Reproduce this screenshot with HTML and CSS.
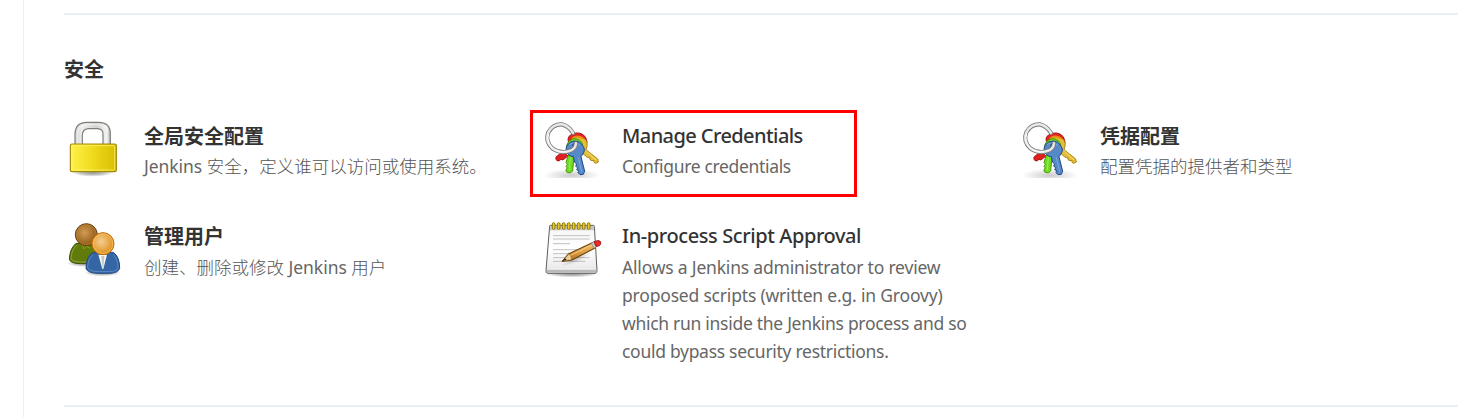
FILE: index.html
```html
<!DOCTYPE html>
<html lang="zh-CN">
<head>
<meta charset="utf-8">
<title>Jenkins</title>
<link rel="stylesheet" href="styles.css">
</head>
<body>
<svg class="defs" width="0" height="0" aria-hidden="true">
  <defs>
    <linearGradient id="gold"><stop offset="0" stop-color="#fff04a"/><stop offset=".45" stop-color="#f0dc20"/><stop offset="1" stop-color="#d8be00"/></linearGradient>
    <linearGradient id="steel"><stop offset="0" stop-color="#d0d3cf"/><stop offset=".2" stop-color="#f0f0ef"/><stop offset=".6" stop-color="#d0d3ce"/><stop offset=".9" stop-color="#f4f4f4"/><stop offset="1" stop-color="#b5b8b2"/></linearGradient>
    <radialGradient id="shade"><stop offset="0" stop-color="#000" stop-opacity=".42"/><stop offset=".6" stop-color="#000" stop-opacity=".22"/><stop offset="1" stop-color="#000" stop-opacity="0"/></radialGradient>
    <radialGradient id="soft"><stop offset="0" stop-color="#000" stop-opacity=".2"/><stop offset="1" stop-color="#000" stop-opacity="0"/></radialGradient>
    <radialGradient id="brown" cx=".42" cy=".4" r=".55"><stop offset="0" stop-color="#d39a55"/><stop offset="1" stop-color="#95601a"/></radialGradient>
    <radialGradient id="orange" cx=".42" cy=".4" r=".55"><stop offset="0" stop-color="#f5cd91"/><stop offset="1" stop-color="#e09525"/></radialGradient>
    <linearGradient id="paper" x2="0" y2="1"><stop offset="0" stop-color="#f5f5f5"/><stop offset=".5" stop-color="#fff"/><stop offset="1" stop-color="#e5e5e5"/></linearGradient>
    <linearGradient id="wood" x2="0" y2="1"><stop offset="0" stop-color="#f2c476"/><stop offset=".5" stop-color="#dda044"/><stop offset="1" stop-color="#a76b1d"/></linearGradient>
    <g id="keys">
      <ellipse cx="107" cy="190" rx="85" ry="20" fill="url(#soft)"/>
      <path d="M82 119L64 131Q57 136 60 142L63 146Q70 149 75 142L81 144L96 132Z" fill="#e02020" stroke="#a40000" stroke-width="2.5"/>
      <path d="M98 91Q92 76 104 69Q121 58 138 66Q151 72 153 89L147 113H105Z" fill="#de2724" stroke="#a40000" stroke-width="2.5"/>
      <path d="M105 86Q117 70 135 75Q157 82 153 103L150 113L185 141L187 150L179 154L174 151L174 145L168 146L162 143L161 136L154 136L135 120Z" fill="#e4bf3a" stroke="#b08409" stroke-width="3"/>
      <path d="M151 117L180 144" stroke="#f5df7a" stroke-width="3"/>
      <path d="M108 80Q123 68 140 79" fill="none" stroke="#ef8c14" stroke-width="6"/>
      <path d="M93 98Q99 81 117 80Q138 83 140 100L115 125L110 177L104 182H96L90 178L91 171L94 168L90 163L94 157L90 151L98 126Q88 112 93 98Z" fill="#70db24" stroke="#4b9a06" stroke-width="3"/>
      <path d="M103 136L100 175" stroke="#9cf057" stroke-width="3"/>
      <path d="M104 90Q126 82 137 97Q150 110 142 124L135 134L146 178L142 187L132 188L126 182L128 176L122 173L125 168L119 162L122 156L116 151L112 134Q95 132 91 117Q87 101 104 90Z" fill="#5589c7" stroke="#204a87" stroke-width="3"/>
      <path d="M127 136L137 179M99 98Q118 86 132 101" fill="none" stroke="#7da8dc" stroke-width="3"/>
      <circle cx="116" cy="100" r="7" fill="#31486b"/>
      <path d="M120 94Q118 112 100 117Q72 126 49 109Q26 87 37 61Q51 36 77 37Q98 41 111 63" fill="none" stroke="#777" stroke-width="12.5" stroke-linecap="round"/>
      <path d="M120 94Q118 112 100 117Q72 126 49 109Q26 87 37 61Q51 36 77 37Q98 41 111 63" fill="none" stroke="#e8e8e8" stroke-width="7.5" stroke-linecap="round"/>
      <path d="M91 119Q65 123 47 106Q30 88 38 66" fill="none" stroke="#fff" stroke-width="3"/>
    </g>
  </defs>
</svg>
<div class="page">
  <main class="panel">
    <section class="section">
      <h2 class="section-title">安全</h2>
      <div class="items">
        <a class="item first-row">
          <svg class="icon" viewBox="12 16 180 180">
            <ellipse cx="98" cy="180" rx="62" ry="12" fill="url(#shade)"/>
            <path d="M45 98V63Q46 29 81 29H117Q151 30 151 63V98H129V64Q129 49 112 48H85Q67 50 67 67V98Z" fill="url(#steel)" stroke="#7c7f7a" stroke-width="3.5"/>
            <path d="M52 94V63Q54 37 82 36H114Q138 37 143 57" fill="none" stroke="#fff" stroke-opacity=".6" stroke-width="3"/>
            <rect x="31" y="94" width="138" height="83" rx="5" fill="url(#gold)" stroke="#a18b09" stroke-width="3.5"/>
            <rect x="36" y="99" width="128" height="73" rx="2" fill="none" stroke="#fff66c" stroke-width="3" opacity=".75"/>
          </svg>
          <div class="body"><div class="name">全局安全配置</div><div class="desc"><span class="latin">Jenkins</span> 安全，定义谁可以访问或使用系统。</div></div>
        </a>
        <a class="item first-row">
          <svg class="icon" viewBox="18 18 180 180"><use href="#keys"/></svg>
          <div class="body"><div class="name en credentials">Manage Credentials</div><div class="desc en">Configure credentials</div></div>
          <span class="highlight"></span>
        </a>
        <a class="item first-row">
          <svg class="icon" viewBox="18 18 180 180"><use href="#keys"/></svg>
          <div class="body"><div class="name">凭据配置</div><div class="desc">配置凭据的提供者和类型</div></div>
        </a>
        <a class="item">
          <svg class="icon" viewBox="12 12 180 180">
            <ellipse cx="73" cy="147" rx="52" ry="12" fill="url(#shade)"/>
            <ellipse cx="128" cy="176" rx="54" ry="11" fill="url(#shade)"/>
            <path d="M48 88Q29 105 28 136Q32 149 62 149H96L118 121Q119 101 108 91Z" fill="#617b0a" stroke="#3d5100" stroke-width="3"/>
            <path d="M50 94Q34 108 33 134Q38 144 62 144H92" fill="none" stroke="#a4b65a" stroke-width="2"/>
            <path d="M66 93l7 12 7-8 10 6" stroke="#89a326" stroke-width="3" fill="none"/>
            <circle cx="79" cy="62" r="33" fill="url(#brown)" stroke="#66400e" stroke-width="3"/>
            <circle cx="79" cy="62" r="29.5" fill="none" stroke="#c38a45" stroke-width="2" opacity=".7"/>
            <path d="M99 116Q78 128 78 163Q82 177 113 178H149Q175 177 179 163Q179 128 160 115Z" fill="#3465a4" stroke="#204a87" stroke-width="3"/>
            <path d="M99 123Q84 132 83 161Q88 172 113 173H148Q170 172 174 161Q173 132 160 123" fill="none" stroke="#739bd0" stroke-width="2"/>
            <path d="M115 122H141L130 165H127Z" fill="#f4f4f3"/><path d="M124 126h9l-3 37h-2z" fill="#c4c8c5"/>
            <circle cx="129" cy="89" r="33" fill="url(#orange)" stroke="#bb6a00" stroke-width="3"/>
            <circle cx="129" cy="89" r="29.5" fill="none" stroke="#ffc974" stroke-width="2"/>
          </svg>
          <div class="body"><div class="name">管理用户</div><div class="desc">创建、删除或修改 <span class="latin">Jenkins</span> 用户</div></div>
        </a>
        <a class="item">
          <svg class="icon" viewBox="18 12 180 180">
            <ellipse cx="108" cy="180" rx="78" ry="10" fill="url(#shade)"/>
            <path d="M41 36Q41 34 44 34H172Q175 34 175 37L183 169Q184 178 177 178H36Q29 178 30 170Z" fill="url(#paper)" stroke="#5d5f5b" stroke-width="3"/>
            <path d="M43 36H173V49H42Z" fill="#c4c4c3"/>
            <path d="M32 166H181V176H33Z" fill="#b9b9b8"/>
            <path d="M34 166H179" stroke="#fff" stroke-width="2"/>
            <path d="M51 65H161M51 75H161M51 89H102M51 107H137M51 119H119M51 131H161M51 142H148" stroke="#b4b5b3" stroke-width="2.5"/>
            <g fill="#e8cb2b" stroke="#967e00" stroke-width="3"><rect x="49" y="26" width="8" height="20" rx="4"/><rect x="64" y="26" width="8" height="20" rx="4"/><rect x="79" y="26" width="8" height="20" rx="4"/><rect x="94" y="26" width="8" height="20" rx="4"/><rect x="109" y="26" width="8" height="20" rx="4"/><rect x="124" y="26" width="8" height="20" rx="4"/><rect x="139" y="26" width="8" height="20" rx="4"/><rect x="154" y="26" width="8" height="20" rx="4"/></g>
            <ellipse cx="120" cy="136" rx="48" ry="9" fill="url(#soft)" transform="rotate(-24 120 136)"/>
            <path d="M79 142L97 120L169 86L177 102L108 138Z" fill="url(#wood)" stroke="#70410b" stroke-width="3.5" stroke-linejoin="round"/>
            <path d="M81 140L98 121L104 126L106 137Z" fill="#ecd19a" stroke="#8b5c1e" stroke-width="1"/>
            <path d="M79 142L87 133L92 137Z" fill="#2b2416"/>
            <path d="M104 124L169 92" stroke="#f8cd80" stroke-width="2.5"/>
            <path d="M166 88L174 83L181 98L174 103Z" fill="#c7c9c5" stroke="#777" stroke-width="1.5"/>
            <path d="M174 83L184 80Q192 79 194 84Q196 92 190 95L181 98Z" fill="#ed2828" stroke="#901010" stroke-width="2.5"/>
          </svg>
          <div class="body"><div class="name en approval">In-process Script Approval</div><div class="desc en long"><span class="loose">Allows a Jenkins administrator to review</span><br><span class="loose">proposed scripts (written e.g. in Groovy)</span><br>which run inside the Jenkins process and so<br>could bypass security restrictions.</div></div>
        </a>
      </div>
    </section>
  </main>
</div>
</body>
</html>
```
FILE: styles.css
```css
* { box-sizing: border-box; }
body {
  margin: 0;
  background: #fff;
  color: #333;
  font-family: "Noto Sans", "Noto Sans CJK SC", sans-serif;
  overflow: hidden;
}
.defs { display: block; }
.page { height: 417px; padding-left: 23px; }
.panel {
  height: 417px;
  border-left: 1px solid #eaeff2;
  padding: 13px 19px 0 40px;
}
.section {
  height: 394px;
  border-top: 2px solid #e9eef2;
  border-bottom: 2px solid #e9eef2;
  padding-top: 41px;
}
.section-title {
  margin: 0;
  font-size: 20px;
  line-height: 28px;
  font-weight: 700;
}
.items {
  display: grid;
  grid-template-columns: repeat(3, 478px);
  grid-template-rows: 100px auto;
  padding-top: 34px;
}
.item { display: flex; position: relative; gap: 20px; }
.icon { width: 60px; height: 60px; flex: none; }
.body { padding-top: 5px; white-space: nowrap; }
.name { font-size: 20px; line-height: 28px; font-weight: 700; }
.name.en { margin-top: -1px; padding-bottom: 1px; font-weight: 500; }
.credentials { letter-spacing: -0.58px; }
.approval { letter-spacing: -0.41px; }
.desc {
  margin-top: 2px;
  font-size: 17.5px;
  line-height: 28px;
  font-weight: 300;
  color: #555;
}
.first-row .desc { margin-top: 1px; }
.desc.en, .latin {
  color: #666;
  font-weight: 450;
  letter-spacing: -0.34px;
}
.desc.long { letter-spacing: -0.29px; }
.desc .loose { letter-spacing: -0.19px; }
.latin { letter-spacing: -0.05px; }
.highlight {
  position: absolute;
  left: -12px;
  top: -8px;
  width: 327px;
  height: 87px;
  border: 3px solid #f00;
}
```
